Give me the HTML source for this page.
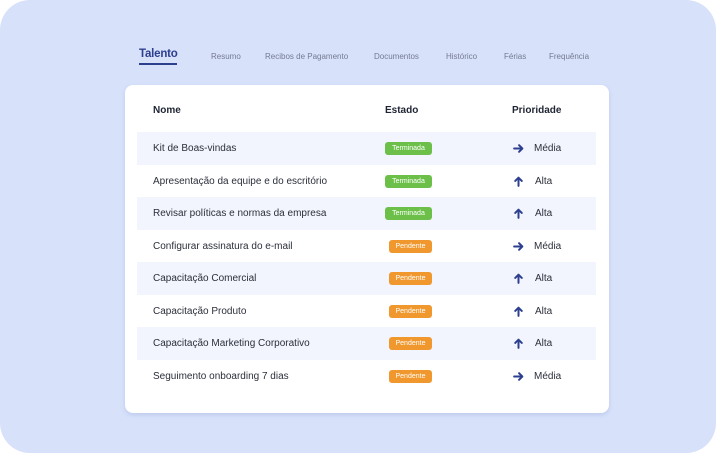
<!DOCTYPE html>
<html><head><style>
*{margin:0;padding:0;box-sizing:border-box}
body{width:716px;height:453px;background:#fff;font-family:"Liberation Sans",sans-serif;position:relative;overflow:hidden}
.bg{position:absolute;left:0;top:0;width:716px;height:453px;background:#d7e1fa;border-radius:30px}
.tab{position:absolute;top:52px;font-size:8px;color:#737b91}
.t0{position:absolute;left:139px;top:48px;font-size:11.5px;font-weight:bold;color:#2d3f8f;letter-spacing:-0.2px}
.ul{position:absolute;left:139px;top:63px;width:38px;height:2px;background:#2d3f8f}
.card{position:absolute;left:125px;top:85px;width:484px;height:328px;background:#fff;border-radius:8px;box-shadow:0 2px 4px rgba(120,140,200,.25)}
.h{position:absolute;top:105px;font-size:10px;font-weight:bold;color:#1f2433}
.row{position:absolute;left:137px;width:459px;height:32.5px}
.row.s{background:#f2f5fd}
.n{position:absolute;left:16px;top:11px;font-size:10px;color:#2b2f3a}
.b{position:absolute;top:10px;height:13px;border-radius:3px;color:#fff;font-size:7px;line-height:13px;text-align:center}
.g{left:248px;width:47px;background:#6cc04a}
.o{left:252px;width:43px;background:#f0982e}
.a{position:absolute;left:376px;top:11px;width:11px;height:11px}
.p{position:absolute;left:397px;top:11px;font-size:10px;color:#2b2f3a}
.p.al{left:398px}
</style></head><body>
<div class="bg"></div>
<div class="t0">Talento</div><div class="ul"></div>
<div class="tab" style="left:211px">Resumo</div>
<div class="tab" style="left:265px">Recibos de Pagamento</div>
<div class="tab" style="left:374px">Documentos</div>
<div class="tab" style="left:446px">Histórico</div>
<div class="tab" style="left:504px">Férias</div>
<div class="tab" style="left:549px">Frequência</div>
<div class="card"></div>
<div class="h" style="left:153px">Nome</div>
<div class="h" style="left:385px">Estado</div>
<div class="h" style="left:512px">Prioridade</div>

<svg width="0" height="0" style="position:absolute"><defs>
<symbol id="r" viewBox="0 0 10 10"><path d="M1 5H8.5M5.5 2L8.5 5L5.5 8" fill="none" stroke="#2d3f8f" stroke-width="1.8" stroke-linecap="round" stroke-linejoin="round"/></symbol>
<symbol id="u" viewBox="0 0 10 10"><path d="M5 9V1.5M2 4.5L5 1.5L8 4.5" fill="none" stroke="#2d3f8f" stroke-width="1.8" stroke-linecap="round" stroke-linejoin="round"/></symbol>
</defs></svg>

<div class="row s" style="top:132px"><div class="n">Kit de Boas-vindas</div><div class="b g">Terminada</div><svg class="a"><use href="#r"/></svg><div class="p">Média</div></div>
<div class="row" style="top:164.5px"><div class="n">Apresentação da equipe e do escritório</div><div class="b g">Terminada</div><svg class="a"><use href="#u"/></svg><div class="p al">Alta</div></div>
<div class="row s" style="top:197px"><div class="n">Revisar políticas e normas da empresa</div><div class="b g">Terminada</div><svg class="a"><use href="#u"/></svg><div class="p al">Alta</div></div>
<div class="row" style="top:229.5px"><div class="n">Configurar assinatura do e-mail</div><div class="b o">Pendente</div><svg class="a"><use href="#r"/></svg><div class="p">Média</div></div>
<div class="row s" style="top:262px"><div class="n">Capacitação Comercial</div><div class="b o">Pendente</div><svg class="a"><use href="#u"/></svg><div class="p al">Alta</div></div>
<div class="row" style="top:294.5px"><div class="n">Capacitação Produto</div><div class="b o">Pendente</div><svg class="a"><use href="#u"/></svg><div class="p al">Alta</div></div>
<div class="row s" style="top:327px"><div class="n">Capacitação Marketing Corporativo</div><div class="b o">Pendente</div><svg class="a"><use href="#u"/></svg><div class="p al">Alta</div></div>
<div class="row" style="top:359.5px"><div class="n">Seguimento onboarding 7 dias</div><div class="b o">Pendente</div><svg class="a"><use href="#r"/></svg><div class="p">Média</div></div>
</body></html>
